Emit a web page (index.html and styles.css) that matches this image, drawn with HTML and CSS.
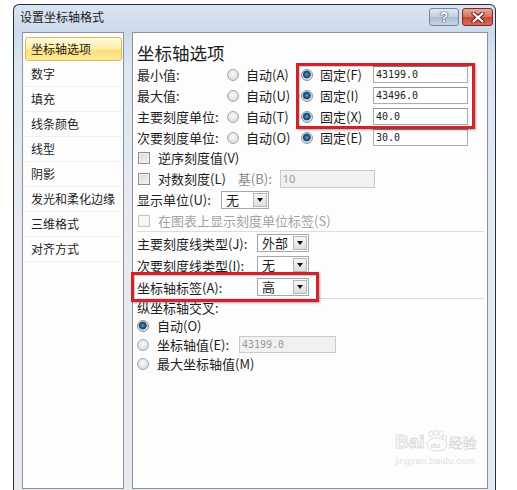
FILE: index.html
```html
<!DOCTYPE html>
<html lang="zh-CN">
  <head>
    <meta charset="UTF-8" />
    <meta name="viewport" content="width=device-width, initial-scale=1.0" />
    <title>设置坐标轴格式</title>
    <link rel="stylesheet" href="styles.css">
  </head>
  <body>
    <div class="window">
      <div class="titlebar">
        <span class="title">设置坐标轴格式</span>
        <div class="caption-btns">
          <span class="cbtn help">?</span>
          <span class="cbtn close">
            <svg width="14" height="11" viewBox="0 0 14 11">
              <path d="M2.5 1.5 L11.5 9.5 M11.5 1.5 L2.5 9.5" stroke="#5e2420" stroke-width="4.2" stroke-linecap="round" />
              <path d="M2.5 1.5 L11.5 9.5 M11.5 1.5 L2.5 9.5" stroke="#fff" stroke-width="2.2" stroke-linecap="round" />
            </svg>
          </span>
        </div>
      </div>
      <div class="client">
        <ul class="nav">
          <li class="active">坐标轴选项</li>
          <li>数字</li>
          <li>填充</li>
          <li>线条颜色</li>
          <li>线型</li>
          <li>阴影</li>
          <li>发光和柔化边缘</li>
          <li>三维格式</li>
          <li>对齐方式</li>
        </ul>
        <div class="pane">
          <div class="pane-title">坐标轴选项</div>

          <!-- 最小值 / 最大值 / 刻度单位 -->
          <div class="bounds">
            <span>最小值:</span>
            <span class="opt"><i class="radio"></i>自动(A)</span>
            <span class="opt"><i class="radio on"></i>固定(F)</span>
            <span class="input">43199.0</span>

            <span>最大值:</span>
            <span class="opt"><i class="radio"></i>自动(U)</span>
            <span class="opt"><i class="radio on"></i>固定(I)</span>
            <span class="input">43496.0</span>

            <span>主要刻度单位:</span>
            <span class="opt"><i class="radio"></i>自动(T)</span>
            <span class="opt"><i class="radio on"></i>固定(X)</span>
            <span class="input">40.0</span>

            <span>次要刻度单位:</span>
            <span class="opt"><i class="radio"></i>自动(O)</span>
            <span class="opt"><i class="radio on"></i>固定(E)</span>
            <span class="input">30.0</span>
          </div>

          <div class="checks">
            <div class="row"><i class="check"></i>逆序刻度值(V)</div>
            <div class="row">
              <i class="check"></i>对数刻度(L)
              <span class="base">基(B):</span>
              <span class="input dis base-input">10</span>
            </div>
            <div class="row">
              <span class="unit-label">显示单位(U):</span>
              <span class="combo combo-unit">无<b></b></span>
            </div>
            <div class="row dim"><i class="check dis"></i>在图表上显示刻度单位标签(S)</div>
          </div>

          <hr class="sep">

          <div class="ticks">
            <div class="row"><span class="tick-label">主要刻度线类型(J):</span><span class="combo">外部<b></b></span></div>
            <div class="row"><span class="tick-label">次要刻度线类型(I):</span><span class="combo">无<b></b></span></div>
            <div class="row"><span class="tick-label">坐标轴标签(A):</span><span class="combo">高<b></b></span></div>
          </div>

          <hr class="sep">

          <div class="cross">
            <div class="cross-title">纵坐标轴交叉:</div>
            <div class="row"><i class="radio on"></i>自动(O)</div>
            <div class="row">
              <i class="radio"></i><span class="cross-label">坐标轴值(E):</span>
              <span class="input dis cross-input">43199.0</span>
            </div>
            <div class="row"><i class="radio"></i>最大坐标轴值(M)</div>
          </div>
        </div>
      </div>
    </div>

    <!-- 红色标注框 -->
    <div class="mark mark-bounds"></div>
    <div class="mark mark-label"></div>

    <div class="watermark">
      <div class="wm-top">
        <span class="wm-bai">Bai</span>
        <span class="wm-du">
          <svg width="24" height="22" viewBox="0 0 24 22">
            <g fill="none" stroke="#e0e0e0" stroke-width="1">
              <ellipse cx="6" cy="4" rx="2.2" ry="2.8" />
              <ellipse cx="11" cy="2.8" rx="2.2" ry="2.4" />
              <ellipse cx="16" cy="3.6" rx="2.2" ry="2.8" />
              <ellipse cx="19.5" cy="8" rx="2" ry="2.4" />
              <path d="M2 13 Q4 8 12 8 Q21 8 22 14 Q22 21 12 21 Q2 21 2 13 Z" />
            </g>
            <text x="5.5" y="18" font-size="8" fill="#dcdcdc" font-family="Liberation Sans, sans-serif" font-weight="bold">du</text>
          </svg>
        </span>
        <span class="wm-cn">经验</span>
      </div>
      <div class="wm-url">jingyan.baidu.com</div>
    </div>
  </body>
</html>
```

FILE: styles.css
```css
body {
  margin: 0;
  width: 517px;
  height: 490px;
  overflow: hidden;
  position: relative;
  background-color: #ffffff;
  font-family: "Noto Sans CJK SC", "Noto Sans", sans-serif;
  font-size: 13px;
  color: #1e1e1e;
}

.window {
  margin: 4px 0 0 13px;
  width: 483px;
  height: 500px;
  box-sizing: border-box;
  border: 1px solid #26303b;
  border-right-color: #1f3350;
  border-bottom: none;
  border-radius: 6px 6px 0 0;
  background: linear-gradient(#dae5f2 0, #ccdaeb 27px, #dde6f0 60px, #e7ebf0 220px);
  display: flex;
  flex-direction: column;
}

.titlebar {
  height: 27px;
  display: flex;
  justify-content: space-between;
  align-items: flex-start;
  padding: 0 2px 0 6px;
  flex: none;
}
.title {
  margin-top: 4px;
  font-size: 12px;
  line-height: 16px;
  color: #1a1a1a;
}
.caption-btns {
  display: flex;
  gap: 3px;
  margin-top: 3px;
}
.cbtn {
  height: 18px;
  box-sizing: border-box;
  border-radius: 3px;
  display: flex;
  align-items: center;
  justify-content: center;
}
.help {
  width: 30px;
  border: 1px solid #76879c;
  background: linear-gradient(#dfe7f1, #c2cfdf 50%, #aebfd4 51%, #c4d3e4);
  font-family: "Liberation Sans", sans-serif;
  font-weight: bold;
  font-size: 14px;
  color: #ffffff;
  text-shadow: 0 0 1px #334459, 0 0 1px #334459, 0 0 1px #334459;
}
.close {
  width: 31px;
  border: 1px solid #7d2d26;
  background: linear-gradient(#eaa89b, #d7705f 50%, #c7483a 51%, #d96b55);
}

.client {
  display: flex;
  gap: 8px;
  padding: 0 7px 0 8px;
  flex: 1;
}

.nav {
  width: 102px;
  height: 457px;
  box-sizing: border-box;
  margin: 0;
  padding: 4px 1px 0 2px;
  list-style: none;
  border: 1px solid #8e9298;
  background-color: #fdfdfd;
  font-size: 12px;
  flex: none;
}
.nav li {
  height: 25px;
  box-sizing: border-box;
  line-height: 24px;
  padding-left: 6px;
  border-bottom: 1px solid #efefef;
  white-space: nowrap;
}
.nav li.active {
  height: 24px;
  margin-bottom: 1px;
  line-height: 22px;
  padding-left: 5px;
  border: 1px solid #dcbc5c;
  border-radius: 3px;
  background: linear-gradient(#fffbe3, #fdeeaa 45%, #fbe07a 60%, #fce89a);
}

.pane {
  flex: 1;
  height: 457px;
  box-sizing: border-box;
  padding: 9px 0 0 4px;
  border: 1px solid #8e9298;
  background-color: #fdfdfd;
}
.pane-title {
  font-size: 17.5px;
  line-height: 22px;
  height: 22px;
}

.bounds {
  display: grid;
  grid-template-columns: 89px 75px 72px 95px;
  grid-auto-rows: 21px;
  align-items: center;
}
.opt {
  display: flex;
  align-items: center;
  gap: 7px;
}
.opt .radio {
  margin-left: 1px;
}
.bounds .opt:nth-child(4n+3) .radio {
  margin-left: 0;
}

.radio {
  width: 12px;
  height: 12px;
  box-sizing: border-box;
  border-radius: 50%;
  border: 1px solid #a4a9af;
  background: radial-gradient(circle at 50% 40%, #fafafa 0, #dfe2e5 60%, #c8ccd1 100%);
  flex: none;
}
.radio.on {
  border-color: #8e959d;
  background: radial-gradient(circle at 48% 45%, #6fb0da 0, #2a6f9e 1.5px, #184a70 3px, #2b5574 3.6px, #cfd4d9 4.2px, #eef0f2 100%);
}

.check {
  width: 12px;
  height: 12px;
  box-sizing: border-box;
  border: 1px solid #8e8f8f;
  background: linear-gradient(135deg, #d9d9d9, #f4f4f4);
  box-shadow: inset 0 0 0 1px #f2f2f2;
  flex: none;
  margin-left: 1px;
}
.check.dis {
  border-color: #c6c6c6;
  background: #f6f6f6;
}

.input {
  height: 17px;
  box-sizing: border-box;
  border: 1px solid #a9adb3;
  border-top-color: #8f949a;
  background-color: #ffffff;
  font-family: "DejaVu Sans Mono", monospace;
  font-size: 10px;
  line-height: 15px;
  padding-left: 2px;
  color: #222222;
}
.input.dis {
  background-color: #f1f1f1;
  border-color: #c8ccd1;
  color: #9a9a9a;
}

.row {
  display: flex;
  align-items: center;
  gap: 8px;
}
.checks .row {
  height: 21px;
}
.checks {
  margin-top: -1px;
}
.base {
  margin-left: 4px;
  color: #8b8b8b;
}
.base-input {
  width: 95px;
  height: 18px;
  margin-left: 0;
  font-family: "Noto Sans", sans-serif;
  font-size: 11px;
}
.unit-label {
  width: 76px;
  margin-left: 0;
}
.dim {
  color: #a3a3a3;
}

.combo {
  width: 52px;
  height: 18px;
  box-sizing: border-box;
  border: 1px solid #a3a8ae;
  background-color: #ffffff;
  display: flex;
  align-items: center;
  padding: 0 1px 0 4px;
  line-height: 16px;
}
.combo-unit {
  width: 48px;
}
.combo b {
  margin-left: auto;
  width: 14px;
  height: 14px;
  box-sizing: border-box;
  border: 1px solid #b3b7bc;
  background: linear-gradient(#f7f7f7, #dedede);
  display: flex;
  align-items: center;
  justify-content: center;
}
.combo b::after {
  content: "";
  border-left: 3.5px solid transparent;
  border-right: 3.5px solid transparent;
  border-top: 4px solid #111111;
}

.sep {
  margin: 0 3px 0 0;
  border: 0;
  border-top: 1px solid #d8dee4;
  height: 0;
}

.ticks .row {
  height: 22px;
  gap: 0;
}
.tick-label {
  width: 120px;
}

.cross-title {
  height: 17px;
  line-height: 17px;
}
.cross .row {
  height: 19px;
}
.cross .radio {
  margin-left: 0;
}
.cross-label {
  width: 74px;
}
.cross-input {
  width: 97px;
}

.mark {
  position: absolute;
  box-sizing: border-box;
  border: 3px solid #d3222b;
  box-shadow: 1px 1px 2px rgba(0, 0, 0, 0.35), inset 1px 1px 1px rgba(0, 0, 0, 0.2);
}
.mark-bounds {
  left: 296px;
  top: 63px;
  width: 179px;
  height: 66px;
}
.mark-label {
  left: 131px;
  top: 272px;
  width: 188px;
  height: 30px;
}

.watermark {
  position: absolute;
  left: 395px;
  top: 430px;
  width: 94px;
  color: #e2e2e2;
}
.wm-top {
  display: flex;
  align-items: flex-end;
}
.wm-bai {
  font-family: "Liberation Sans", sans-serif;
  font-weight: bold;
  font-size: 19px;
  line-height: 20px;
  color: transparent;
  -webkit-text-stroke: 1px #dcdcdc;
}
.wm-du {
  display: flex;
}
.wm-cn {
  font-size: 14px;
  line-height: 20px;
  color: #e6e6e6;
  -webkit-text-stroke: 0.4px #d6d6d6;
}
.wm-url {
  font-family: "Liberation Sans", sans-serif;
  font-size: 9.5px;
  color: #e2e2e2;
  margin-top: 3px;
  letter-spacing: 0.2px;
}
```
